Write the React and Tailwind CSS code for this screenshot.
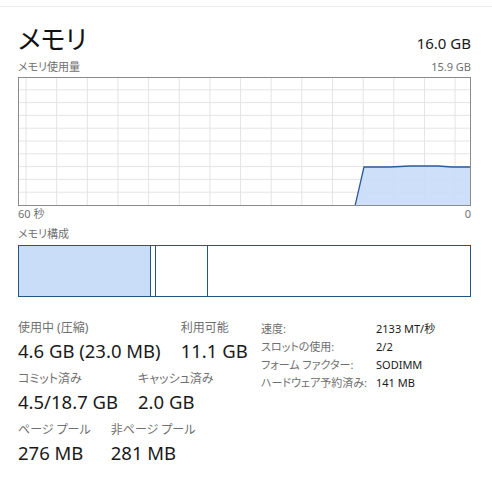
const gridX = Array.from({ length: 15 }, (_, i) => 8 + i * 30.65);
const gridY = Array.from({ length: 9 }, (_, i) => (i + 1) * 12.8);

const usage = [
  [337, 129],
  [346, 90],
  [372, 90],
  [392, 89],
  [420, 89],
  [434, 90],
  [453, 90],
  [453, 129],
];

function UsageGraph() {
  const pts = usage.map((p) => p.join(",")).join(" ");
  return (
    <div className="h-[129px] w-[453px] border border-[#8b8b8b]">
      <svg width="451" height="127" viewBox="1 1 451 127" className="block">
        {gridX.map((x) => (
          <line key={x} x1={x} y1="0" x2={x} y2="129" stroke="#e4e4e4" strokeWidth="1" />
        ))}
        {gridY.map((y) => (
          <line key={y} x1="0" y1={y} x2="453" y2={y} stroke="#e4e4e4" strokeWidth="1" />
        ))}
        <polygon points={pts} fill="#c9ddf8" fillOpacity="0.9" />
        <polyline
          points={usage.slice(0, -1).map((p) => p.join(",")).join(" ")}
          fill="none"
          stroke="#2a5a98"
          strokeWidth="1.3"
        />
      </svg>
    </div>
  );
}

function Composition() {
  return (
    <div className="flex h-[52px] w-[453px] border border-[#24557f]">
      <div className="w-[132px] border-r border-[#24557f] bg-[#c9ddf8]" />
      <div className="w-[5px] border-r border-[#24557f]" />
      <div className="w-[52px] border-r border-[#24557f]" />
      <div className="flex-1" />
    </div>
  );
}

function Stat({ label, value }) {
  return (
    <div className="flex flex-col">
      <span className="text-[12px] leading-[16px] text-[#6f6f6f]">{label}</span>
      <span className="mt-[2px] text-[18.5px] leading-[26px] text-[#1a1a1a]">{value}</span>
    </div>
  );
}

const details = [
  ["速度:", "2133 MT/秒"],
  ["スロットの使用:", "2/2"],
  ["フォーム ファクター:", "SODIMM"],
  ["ハードウェア予約済み:", "141 MB"],
];

export default function App() {
  return (
    <div className="h-[483px] w-[492px] bg-white font-['Noto_Sans','Noto_Sans_CJK_JP',sans-serif] [font-feature-settings:'palt']">
      <div className="h-[6px]" />
      <div className="border-t border-[#ececec] pl-[18px] pr-[21px]">
        <div className="mt-[17px] flex h-[30px] items-baseline justify-between">
          <h1 className="text-[26px] leading-[30px] text-[#111]">メモリ</h1>
          <span className="text-[15px] text-[#1a1a1a]">16.0 GB</span>
        </div>

        <div className="mt-[4px] flex h-[18px] items-center justify-between text-[11px] text-[#707070]">
          <span>メモリ使用量</span>
          <span>15.9 GB</span>
        </div>
        <div className="mt-[1px]">
          <UsageGraph />
        </div>
        <div className="flex h-[16px] items-center justify-between text-[11px] text-[#707070]">
          <span>60 秒</span>
          <span>0</span>
        </div>

        <div className="mt-[4px] flex h-[16px] items-center text-[11px] text-[#707070]">
          メモリ構成
        </div>
        <div className="mt-[3px]">
          <Composition />
        </div>

        <div className="mt-[23px] flex">
          <div className="flex w-[243px] flex-none flex-col gap-[7px]">
            <div className="flex gap-[20px]">
              <Stat label="使用中 (圧縮)" value="4.6 GB (23.0 MB)" />
              <Stat label="利用可能" value="11.1 GB" />
            </div>
            <div className="flex gap-[20px]">
              <Stat label="コミット済み" value="4.5/18.7 GB" />
              <Stat label="キャッシュ済み" value="2.0 GB" />
            </div>
            <div className="flex gap-[20px]">
              <Stat label="ページ プール" value="276 MB" />
              <Stat label="非ページ プール" value="281 MB" />
            </div>
          </div>

          <div className="grid grid-cols-[115px_auto] content-start">
            {details.map(([k, v]) => (
              <div key={k} className="contents">
                <span className="text-[11px] leading-[18px] text-[#6f6f6f]">{k}</span>
                <span className="text-[11px] leading-[18px] text-[#1a1a1a]">{v}</span>
              </div>
            ))}
          </div>
        </div>
      </div>
    </div>
  );
}
